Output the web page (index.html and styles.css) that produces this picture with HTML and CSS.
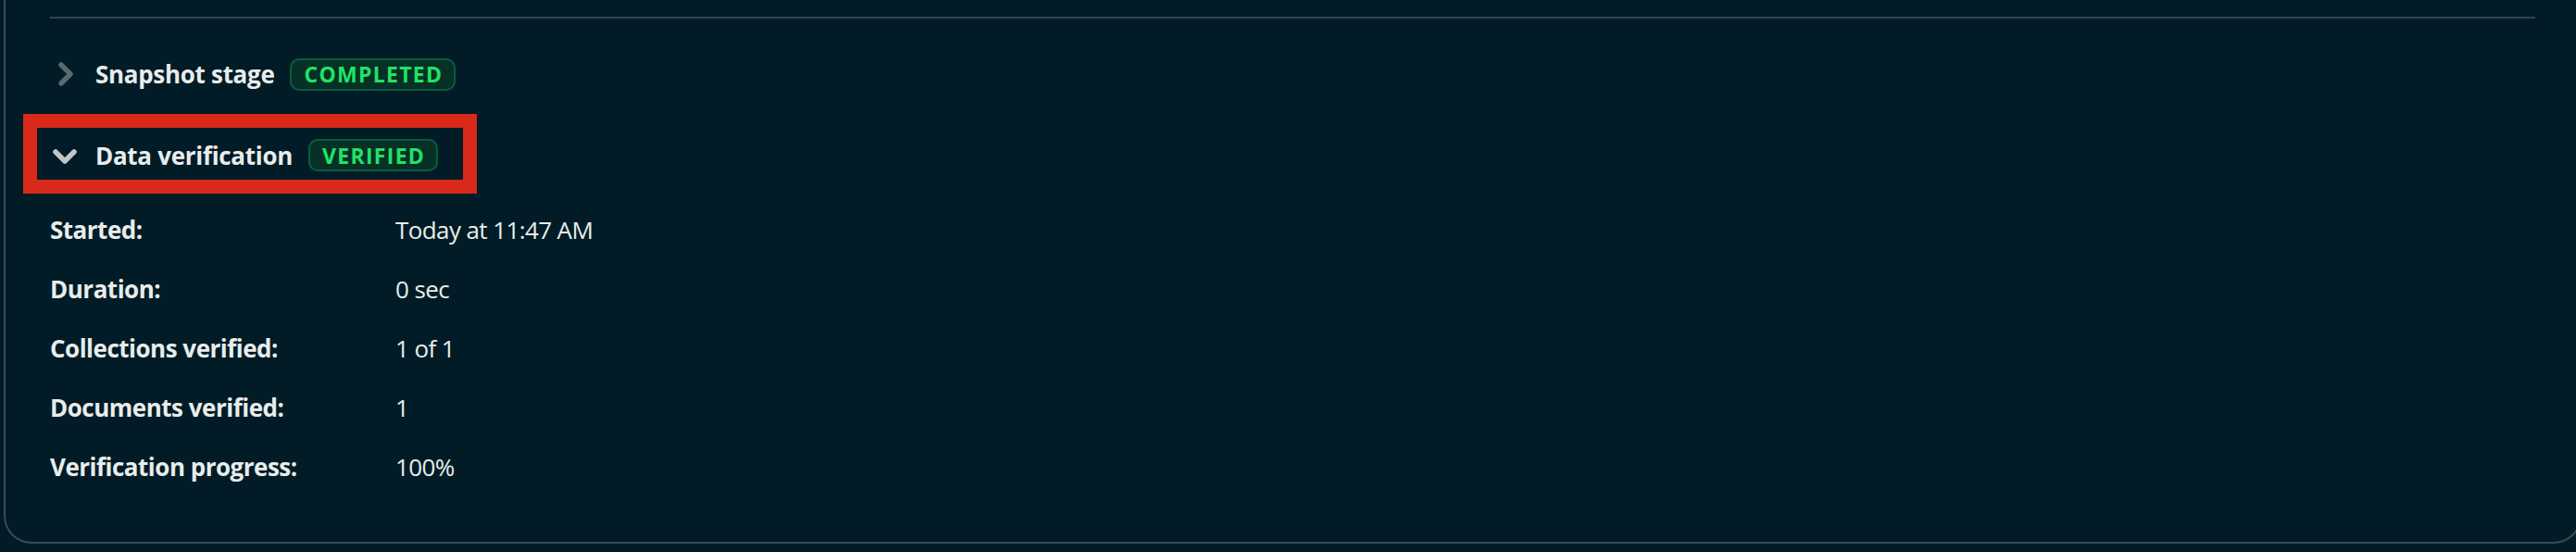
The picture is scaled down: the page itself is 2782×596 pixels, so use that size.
FILE: index.html
```html
<!DOCTYPE html>
<html lang="en">
<head>
  <meta charset="UTF-8">
  <title>Migration progress</title>
  <link rel="stylesheet" href="styles.css">
</head>
<body>
  <div class="card">
    <div class="divider"></div>

    <div class="stage-head">
      <svg class="chevron chevron-closed" width="32" height="32" viewBox="0 0 32 32">
        <polyline points="12,6 22,16 12,26" />
      </svg>
      <span class="stage-title">Snapshot stage</span>
      <span class="badge">Completed</span>
    </div>

    <div class="stage-head highlight">
      <svg class="chevron chevron-open" width="32" height="32" viewBox="0 0 32 32">
        <polyline points="6,12 16,22 26,12" />
      </svg>
      <span class="stage-title">Data verification</span>
      <span class="badge">Verified</span>
    </div>

    <div class="details">
      <div class="label">Started:</div>
      <div class="value">Today at 11:47 AM</div>

      <div class="label">Duration:</div>
      <div class="value">0 sec</div>

      <div class="label">Collections verified:</div>
      <div class="value">1 of 1</div>

      <div class="label">Documents verified:</div>
      <div class="value">1</div>

      <div class="label">Verification progress:</div>
      <div class="value">100%</div>
    </div>
  </div>
</body>
</html>
```

FILE: styles.css
```css
html, body {
  margin: 0;
  overflow: hidden;
  background-color: #021c27;
}
body {
  font-family: "Open Sans", "Liberation Sans", sans-serif;
  color: #e8edeb;
}
.card {
  box-sizing: border-box;
  width: 2784px;
  margin-left: 4px;
  padding: 18px 48px 49px;
  border: 2px solid #3b4a52;
  border-top: none;
  border-radius: 0 0 30px 30px;
}
.divider {
  height: 2px;
  background: #35444b;
}
.stage-head {
  display: flex;
  align-items: center;
  gap: 17px;
  height: 56px;
  margin-top: 32px;
}
.stage-head.highlight {
  box-sizing: border-box;
  width: fit-content;
  margin-top: 30px;
  margin-left: -14px;
  padding: 3px 27px 0 14px;
  outline: 15px solid #d8291a;
}
.chevron polyline {
  fill: none;
  stroke-width: 5.5;
  stroke-linecap: round;
  stroke-linejoin: round;
}
.chevron-closed polyline {
  stroke: #5b686f;
}
.chevron-open polyline {
  stroke: #c1c7c6;
}
.stage-title {
  font-size: 26px;
  font-weight: 700;
  letter-spacing: -0.3px;
}
.badge {
  box-sizing: border-box;
  height: 35px;
  display: inline-flex;
  align-items: center;
  padding: 0 12px 0 13px;
  border: 2px solid #0b5b40;
  border-radius: 10px;
  background: #073127;
  color: #1fe464;
  font-size: 23px;
  font-weight: 700;
  letter-spacing: 1.3px;
  text-transform: uppercase;
}
.details {
  display: grid;
  grid-template-columns: 373px 1fr;
  grid-auto-rows: 64px;
  align-items: center;
  margin-top: 22px;
  font-size: 26px;
}
.label {
  font-weight: 700;
  letter-spacing: -0.5px;
}
.value {
  font-weight: 400;
  letter-spacing: -0.6px;
}
```
